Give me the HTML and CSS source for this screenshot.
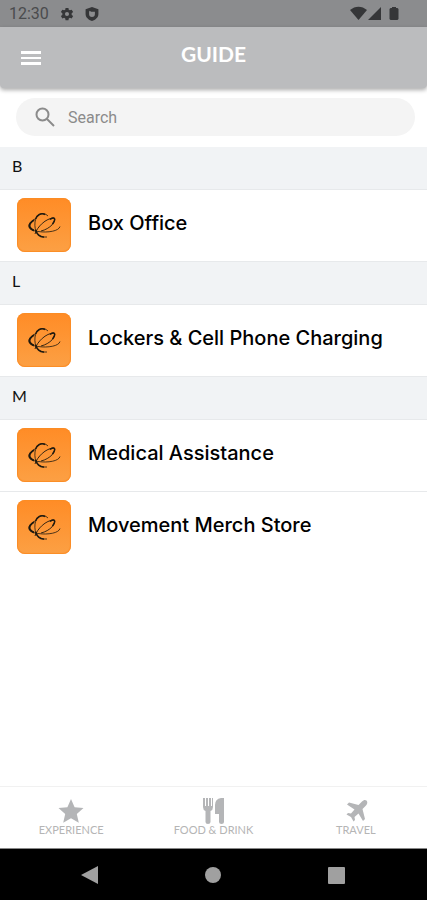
FILE: index.html
```html
<!DOCTYPE html>
<html lang="en">
<head>
<meta charset="utf-8">
<meta name="viewport" content="width=device-width, initial-scale=1">
<title>Guide</title>
<link rel="stylesheet" href="styles.css">
</head>
<body>
<svg class="defs" aria-hidden="true">
  <symbol id="orbit" viewBox="0 0 54 54">
    <g fill="none" stroke="#1f1a10">
      <path d="M31 18C26 13 19 16 18 24C17 33 21 40 30 39" stroke-width=".8"/>
      <path d="M28 16.500C24 14.500 20 17 18.500 21M18.500 32C19.500 36 23 39.500 27 39" stroke-width="1.500"/>
      <path d="M18 21C9 26 10 32 21 33.500C31 35 42 33 43 28.500" stroke-width=".8"/>
      <path d="M17 22C11 26 11 30 17 32.500" stroke-width="2"/>
      <path d="M18 36C20 29 29 20 37 20C40 23 33 31 24 33" stroke-width=".9"/>
      <path d="M33 21.500C35 20 37 19.500 37.500 20.500C38 22 37 24 35.500 26" stroke-width="1.500"/>
    </g>
  </symbol>
</svg>
<div class="screen">
  <div class="status">
    <span class="clock">12:30</span>
    <svg class="status-icon" viewBox="0 0 24 24"><path fill-rule="evenodd" d="M20 13.500v-3l2.500-2-2.500-4-3 1-2-1-.5-3h-5l-.5 3-2 1-3-1-2.500 4 2.500 2v3l-2.500 2 2.500 4 3-1 2 1 .5 3h5l.5-3 2-1 3 1 2.500-4zM12 15.500a3.500 3.500 0 1 1 0-7 3.500 3.500 0 0 1 0 7z"/></svg>
    <svg class="status-icon" viewBox="0 0 24 24"><path fill-rule="evenodd" d="M12 0 1 4v8c0 6 5 10 11 12 6-2 11-6 11-12V4zM8 6.500l2.500 1.500H17v4a5 5 0 0 1-10 0V8z"/></svg>
    <span class="signals">
      <svg width="17" height="15" viewBox="0 0 17 15"><path d="M0 4C5-.5 12-.5 17 4L8.500 14z"/></svg>
      <svg width="14" height="15" viewBox="0 0 14 15"><path d="M13 1v13H0z"/></svg>
      <svg class="battery" width="10" height="15" viewBox="0 0 10 15"><path d="M3 1h4v1h1.500l1 1v10l-1 1h-7l-1-1V3l1-1H3z"/></svg>
    </span>
  </div>
  <header class="topbar">
    <button class="menu" aria-label="Menu"><svg width="20" height="14" viewBox="0 0 20 14"><path d="M0 0h20v3H0zM0 6h20v2H0zM0 11h20v3H0z"/></svg></button>
    <h1>GUIDE</h1>
  </header>
  <main>
    <label class="search">
      <svg width="20" height="20" viewBox="0 0 20 20" fill="none" stroke="#8b8b8b" stroke-width="2"><circle cx="7.500" cy="7.500" r="6"/><path d="M12 12l7 7"/></svg>
      <input type="search" placeholder="Search" aria-label="Search">
    </label>
    <section><h2>B</h2>
      <a class="row" href="#"><svg class="tile"><use href="#orbit"/></svg><span>Box Office</span></a>
    </section>
    <section><h2>L</h2>
      <a class="row" href="#"><svg class="tile"><use href="#orbit"/></svg><span>Lockers &amp; Cell Phone Charging</span></a>
    </section>
    <section><h2>M</h2>
      <a class="row" href="#"><svg class="tile"><use href="#orbit"/></svg><span>Medical Assistance</span></a>
      <a class="row" href="#"><svg class="tile"><use href="#orbit"/></svg><span>Movement Merch Store</span></a>
    </section>
  </main>
  <nav class="tabs">
    <a href="#"><svg width="26" height="26" viewBox="0 0 26 26"><path d="M13 1l3.600 8.200 8.900.8-6.700 6 2 8.800-7.800-4.600-7.800 4.600 2-8.800-6.700-6 8.900-.8z"/></svg><span>EXPERIENCE</span></a>
    <a href="#"><svg width="26" height="26" viewBox="0 0 26 26"><path d="M3 0h2v8h1V0h2v8h1V0h2v8h1V0h1v9q0 3-2.500 4v11q0 2-2.500 2t-2.500-2V13Q3 12 3 9zM15 7q0-6 6-7h3v24q0 2-2.500 2T19 24v-8h-4z"/></svg><span>FOOD &amp; DRINK</span></a>
    <a href="#"><svg width="26" height="26" viewBox="0 0 26 26"><path d="M23.500 2.500c-1.500-1.200-3-.5-4.500 1L15.500 7 6 4.500 4 6.500l7.500 5L8 15.500 5 15l-1.500 1.500 4.500 2.500 2.500 4.500L12 22l-.5-3 4-3.500 4.500 7.500 2-2L19.500 11 23 7.500c1.500-1.500 1.800-3.500.5-5z"/></svg><span>TRAVEL</span></a>
  </nav>
  <div class="system">
    <button aria-label="Back"><svg width="18" height="18" viewBox="0 0 18 18"><path d="M0 9 17 0v18z"/></svg></button>
    <button aria-label="Home"><svg width="18" height="18" viewBox="0 0 18 18"><circle cx="9" cy="9" r="8"/></svg></button>
    <button aria-label="Recent apps"><svg width="18" height="18" viewBox="0 0 18 18"><rect width="17" height="17" y="1" rx="1"/></svg></button>
  </div>
</div>
</body>
</html>
```
FILE: styles.css
```css
* { box-sizing: border-box; }
body { margin: 0; background: #fff; color: #111; font-family: Lato, "Liberation Sans", sans-serif; }
svg { display: block; flex: none; }
button { border: 0; padding: 0; background: none; }
a { color: inherit; text-decoration: none; }
.defs { position: absolute; width: 0; height: 0; }
.screen { min-height: 100vh; display: flex; flex-direction: column; }
.status { height: 27px; padding: 0 28px 0 9px; display: flex; align-items: center; gap: 11px; background: #8b8c8e; fill: #353638; }
.clock { font: 16px Roboto, sans-serif; color: #4a4b4d; }
.status-icon { width: 14px; height: 14px; }
.signals { margin-left: auto; display: flex; gap: 1px; }
.battery { margin-left: 6px; }
.topbar { height: 61px; padding: 0 21px; display: grid; grid-template-columns: 20px 1fr 20px; align-items: center; background: #bbbcbe; border-radius: 0 0 4px 4px; box-shadow: 0 2px 4px #0005; }
.menu { fill: #fff; }
h1 { margin: 0; padding-bottom: 8px; color: #fff; font-size: 21px; line-height: 24px; font-weight: 700; text-align: center; }
main { flex: 1; }
.search { height: 38px; margin: 10px 12px 11px 16px; padding: 0 19px; display: flex; align-items: center; gap: 13px; background: #f4f4f4; border-radius: 19px; }
.search input { flex: 1; min-width: 0; border: 0; padding: 0; outline: 0; background: none; font: 16px Roboto, sans-serif; }
.search input::placeholder { color: #8b8b8b; opacity: 1; }
h2 { height: 43px; margin: 0; padding: 9px 12px; background: #f1f3f5; border-bottom: 1px solid #e7e9eb; font-size: 16px; line-height: 20px; font-weight: 400; }
.row { height: 72px; padding: 8px 17px; display: flex; gap: 17px; border-bottom: 1px solid #e7e9eb; color: #000; font-size: 20px; line-height: 24px; font-weight: 500; }
.row span { padding-top: 13px; font-family: Inter, sans-serif; }
section:last-child .row:last-child { border-bottom: 0; }
.tile { width: 54px; height: 54px; border-radius: 8px; background: linear-gradient(#ff8c26, #fca044); box-shadow: inset 0 0 1px 1px #fb8c25; }
.tabs { height: 62px; padding-top: 11px; display: grid; grid-template-columns: repeat(3, 1fr); border-top: 1px solid #f1f1f1; color: #b5b5b5; fill: #b4b5b7; }
.tabs a { display: flex; flex-direction: column; align-items: center; font-size: 11px; line-height: 12px; }
.system { height: 52px; padding: 0 28px; display: grid; grid-template-columns: repeat(3, 1fr); background: #000; border-top: 1px solid #888; fill: #a0a0a0; }
.system button { display: grid; place-items: center; }
```
